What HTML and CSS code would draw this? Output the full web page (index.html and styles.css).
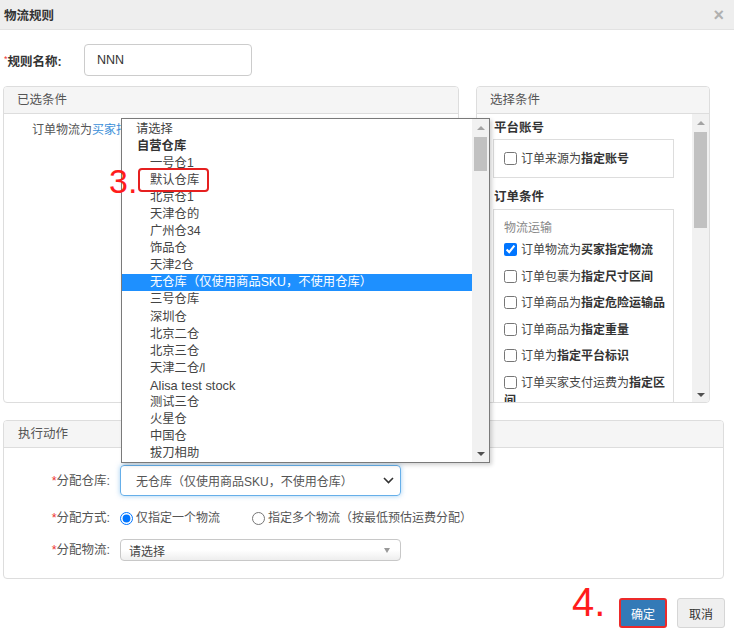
FILE: index.html
```html
<!DOCTYPE html>
<html lang="zh">
<head>
<meta charset="utf-8">
<title>物流规则</title>
<link rel="stylesheet" href="styles.css">
</head>
<body>
<div class="modal">
  <div class="modal-header">
    <span class="title">物流规则</span>
    <span class="close">×</span>
  </div>
  <div class="modal-body">
    <div class="name-row">
      <label class="name-label"><span class="req-small">*</span>规则名称:</label>
      <div class="name-input">NNN</div>
    </div>
    <div class="panels">
      <div class="panel panel-left">
        <div class="panel-head">已选条件</div>
        <div class="left-body">订单物流为<span class="link">买家指定物流</span></div>
      </div>
      <div class="panel panel-right">
        <div class="panel-head">选择条件</div>
        <div class="right-body">
          <div class="rb-content">
            <div class="section-title">平台账号</div>
            <div class="box box-account">
              <label class="chk"><input type="checkbox">订单来源为<b>指定账号</b></label>
            </div>
            <div class="section-title st2">订单条件</div>
            <div class="box box-order">
              <div class="group-name">物流运输</div>
              <label class="chk"><input type="checkbox" checked>订单物流为<b>买家指定物流</b></label>
              <label class="chk"><input type="checkbox">订单包裹为<b>指定尺寸区间</b></label>
              <label class="chk"><input type="checkbox">订单商品为<b>指定危险运输品</b></label>
              <label class="chk"><input type="checkbox">订单商品为<b>指定重量</b></label>
              <label class="chk"><input type="checkbox">订单为<b>指定平台标识</b></label>
              <label class="chk"><input type="checkbox">订单买家支付运费为<b>指定区间</b></label>
            </div>
          </div>
          <div class="scrollbar scrollbar-panel">
            <div class="sb-btn"><span class="tri-up"></span></div>
            <div class="sb-thumb thumb-panel"></div>
            <div class="sb-space"></div>
            <div class="sb-btn"><span class="tri-down"></span></div>
          </div>
        </div>
      </div>
    </div>
    <div class="panel exec">
      <div class="panel-head exec-head">执行动作</div>
      <div class="exec-body">
        <div class="form-row">
          <label class="form-label"><span class="req">*</span>分配仓库:</label>
          <div class="select-focus">
            <span>无仓库（仅使用商品SKU，不使用仓库）</span>
            <svg class="chev" width="11" height="7" viewBox="0 0 11 7"><polyline points="1,1 5.5,5.5 10,1" fill="none" stroke="#333" stroke-width="1.6"/></svg>
          </div>
        </div>
        <div class="form-row row-radio">
          <label class="form-label"><span class="req">*</span>分配方式:</label>
          <label class="radio"><input type="radio" name="m" checked>仅指定一个物流</label>
          <label class="radio radio2"><input type="radio" name="m">指定多个物流（按最低预估运费分配）</label>
        </div>
        <div class="form-row row-ship">
          <label class="form-label"><span class="req">*</span>分配物流:</label>
          <div class="select-plain">
            <span>请选择</span>
            <span class="tri-small"></span>
          </div>
        </div>
      </div>
    </div>
  </div>
  <div class="modal-footer">
    <button class="btn btn-primary">确定</button>
    <button class="btn btn-default">取消</button>
  </div>
</div>

<div class="dropdown">
  <ul class="dd-list">
    <li class="opt top">请选择</li>
    <li class="group">自营仓库</li>
    <li class="opt">一号仓1</li>
    <li class="opt">默认仓库</li>
    <li class="opt">北京仓1</li>
    <li class="opt">天津仓的</li>
    <li class="opt">广州仓34</li>
    <li class="opt">饰品仓</li>
    <li class="opt">天津2仓</li>
    <li class="opt selected">无仓库（仅使用商品SKU，不使用仓库）</li>
    <li class="opt">三号仓库</li>
    <li class="opt">深圳仓</li>
    <li class="opt">北京二仓</li>
    <li class="opt">北京三仓</li>
    <li class="opt">天津二仓/l</li>
    <li class="opt latin">Alisa test stock</li>
    <li class="opt">测试三仓</li>
    <li class="opt">火星仓</li>
    <li class="opt">中国仓</li>
    <li class="opt">拔刀相助</li>
  </ul>
  <div class="scrollbar scrollbar-dd">
    <div class="sb-btn"><span class="tri-up"></span></div>
    <div class="sb-thumb thumb-dd"></div>
    <div class="sb-space"></div>
    <div class="sb-btn"><span class="tri-down"></span></div>
  </div>
</div>

<div class="anno anno-3">3.</div>
<div class="anno-box"></div>
<div class="anno anno-4">4.</div>
</body>
</html>
```

FILE: styles.css
```css
* { box-sizing: border-box; }

body {
  margin: 0;
  width: 734px;
  height: 634px;
  position: relative;
  overflow: hidden;
  background: #fff;
  font-family: "Liberation Sans", "Noto Sans CJK SC", sans-serif;
  font-size: 12px;
  color: #333;
}

.modal-header {
  height: 30px;
  background: #eeeeee;
  border-bottom: 1px solid #e2e2e2;
  display: flex;
  align-items: center;
  justify-content: space-between;
  padding: 0 10px 0 4px;
}
.title { font-size: 12.5px; font-weight: bold; color: #333; }
.close { font-size: 18px; color: #b0b0b0; font-weight: bold; line-height: 1; }

.modal-body { padding: 14px 10px 0 3px; }

.name-row { display: flex; align-items: center; height: 32px; }
.name-label {
  width: 81px;
  padding-left: 1px;
  font-weight: bold;
  font-size: 12.5px;
  color: #333;
}
.req-small { color: #e33; font-size: 9px; vertical-align: 4px; font-weight: normal; }
.name-input {
  width: 168px;
  height: 32px;
  border: 1px solid #ccc;
  border-radius: 4px;
  padding: 0 12px;
  line-height: 30px;
  font-size: 12.5px;
  color: #333;
}

.panels { display: flex; gap: 17px; margin-top: 10px; }
.panel {
  border: 1px solid #ddd;
  border-radius: 4px;
  background: #fff;
  overflow: hidden;
}
.panel-left { width: 456px; height: 317px; }
.panel-right { width: 234px; height: 317px; }
.panel-head {
  height: 27px;
  background: #f5f5f5;
  border-bottom: 1px solid #ddd;
  padding-left: 13px;
  line-height: 26px;
  font-size: 12.5px;
  color: #555;
}

.left-body {
  padding: 8px 28px;
  font-size: 12px;
  line-height: 16px;
  color: #555;
}
.link { color: #3b8fd9; }

.right-body { display: flex; height: 289px; }
.rb-content { flex: 1; padding: 4px 0 0 17px; overflow: hidden; }
.section-title { font-size: 12.5px; font-weight: bold; line-height: 20px; color: #333; }
.st2 { margin-top: 9px; }
.box { width: 181px; border: 1px solid #ddd; margin-left: -1px; }
.box-account {
  margin-top: 1px;
  height: 39px;
  display: flex;
  align-items: center;
  padding-left: 10px;
}
.box-order { margin-top: 2px; padding: 9px 4px 0 10px; }
.group-name { font-size: 12px; line-height: 18px; color: #888; }
.chk {
  display: block;
  font-size: 12px;
  line-height: 18px;
  color: #444;
  margin-bottom: 8.5px;
}
.box-order .group-name + .chk { margin-top: 4px; }
.box-account .chk { margin-bottom: 0; }
.chk input {
  width: 13px;
  height: 13px;
  margin: 0 4px 0 0;
  vertical-align: -2px;
}
.chk b { font-weight: bold; color: #333; }

.scrollbar {
  width: 17px;
  background: #f1f1f1;
  display: flex;
  flex-direction: column;
}
.sb-btn {
  height: 17px;
  display: flex;
  align-items: center;
  justify-content: center;
}
.sb-thumb { margin: 1px 2px 0; background: #c1c1c1; }
.thumb-panel { height: 96px; }
.thumb-dd { height: 34px; }
.sb-space { flex: 1; }
.tri-up {
  width: 0; height: 0;
  border-left: 4px solid transparent;
  border-right: 4px solid transparent;
  border-bottom: 4px solid #a3a3a3;
}
.tri-down {
  width: 0; height: 0;
  border-left: 4px solid transparent;
  border-right: 4px solid transparent;
  border-top: 4px solid #505050;
}

.exec { margin-top: 17px; height: 159px; }
.exec-head { padding-left: 14px; }
.exec-body { padding-top: 17px; }
.form-row { display: flex; align-items: center; }
.form-label {
  width: 116px;
  padding-right: 10px;
  text-align: right;
  font-size: 12.5px;
  color: #555;
  line-height: 20px;
}
.req { color: #e33; }

.select-focus {
  width: 281px;
  height: 31px;
  border: 1px solid #66afe9;
  border-radius: 4px;
  box-shadow: 0 0 5px rgba(102, 175, 233, 0.6);
  padding: 0 6px 0 15px;
  display: flex;
  align-items: center;
  justify-content: space-between;
  font-size: 12px;
  color: #555;
}

.row-radio { margin-top: 12px; }
.radio {
  display: flex;
  align-items: center;
  font-size: 12px;
  line-height: 20px;
  color: #555;
}
.radio input { width: 13px; height: 13px; margin: 0 3px 0 0; }
.radio2 { margin-left: 32px; }

.row-ship { margin-top: 11px; }
.select-plain {
  width: 281px;
  height: 22px;
  border: 1px solid #c8c8c8;
  border-radius: 4px;
  background: linear-gradient(#ffffff 50%, #eeeeee 100%);
  padding: 0 10px 0 8px;
  display: flex;
  align-items: center;
  justify-content: space-between;
  font-size: 12px;
  color: #444;
}
.tri-small {
  width: 0; height: 0;
  border-left: 3.5px solid transparent;
  border-right: 3.5px solid transparent;
  border-top: 5px solid #999;
}

.modal-footer {
  display: flex;
  justify-content: flex-end;
  gap: 10px;
  padding: 19px 9px 0 0;
}
.btn {
  width: 48px;
  height: 30px;
  border-radius: 3px;
  font-family: "Liberation Sans", "Noto Sans CJK SC", sans-serif;
  font-size: 12px;
  padding: 0;
}
.btn-primary {
  background: #337ab7;
  color: #fff;
  border: 2px solid #ec2a2a;
}
.btn-default {
  background: #efefef;
  color: #333;
  border: 1px solid #d6d6d6;
}

.dropdown {
  position: absolute;
  left: 121px;
  top: 118px;
  width: 369px;
  height: 345px;
  border: 1px solid #7a7a7a;
  background: #fff;
  box-shadow: 2px 2px 4px rgba(0, 0, 0, 0.18);
  display: flex;
}
.dd-list {
  flex: 1;
  list-style: none;
  margin: 0;
  padding: 2px 0 0 0;
  overflow: hidden;
}
.dd-list li {
  height: 17.05px;
  line-height: 17.05px;
  font-size: 12.3px;
  color: #444;
  white-space: nowrap;
}
.dd-list .latin { font-size: 12.8px; }
.dd-list .opt { padding-left: 28px; }
.dd-list .opt.top { padding-left: 14px; }
.dd-list .group { padding-left: 15px; font-weight: bold; color: #333; }
.dd-list .selected { background: #1e90ff; color: #fff; }

.anno {
  position: absolute;
  color: #ff1c1c;
  font-family: "Liberation Sans", sans-serif;
  white-space: nowrap;
}
.anno-3 { left: 109px; top: 164px; font-size: 34px; line-height: 34px; }
.anno-4 { left: 572px; top: 582px; font-size: 40px; line-height: 40px; }
.anno-box {
  position: absolute;
  left: 138px;
  top: 168px;
  width: 71px;
  height: 24px;
  border: 2px solid #e52020;
  border-radius: 4px;
}
```
